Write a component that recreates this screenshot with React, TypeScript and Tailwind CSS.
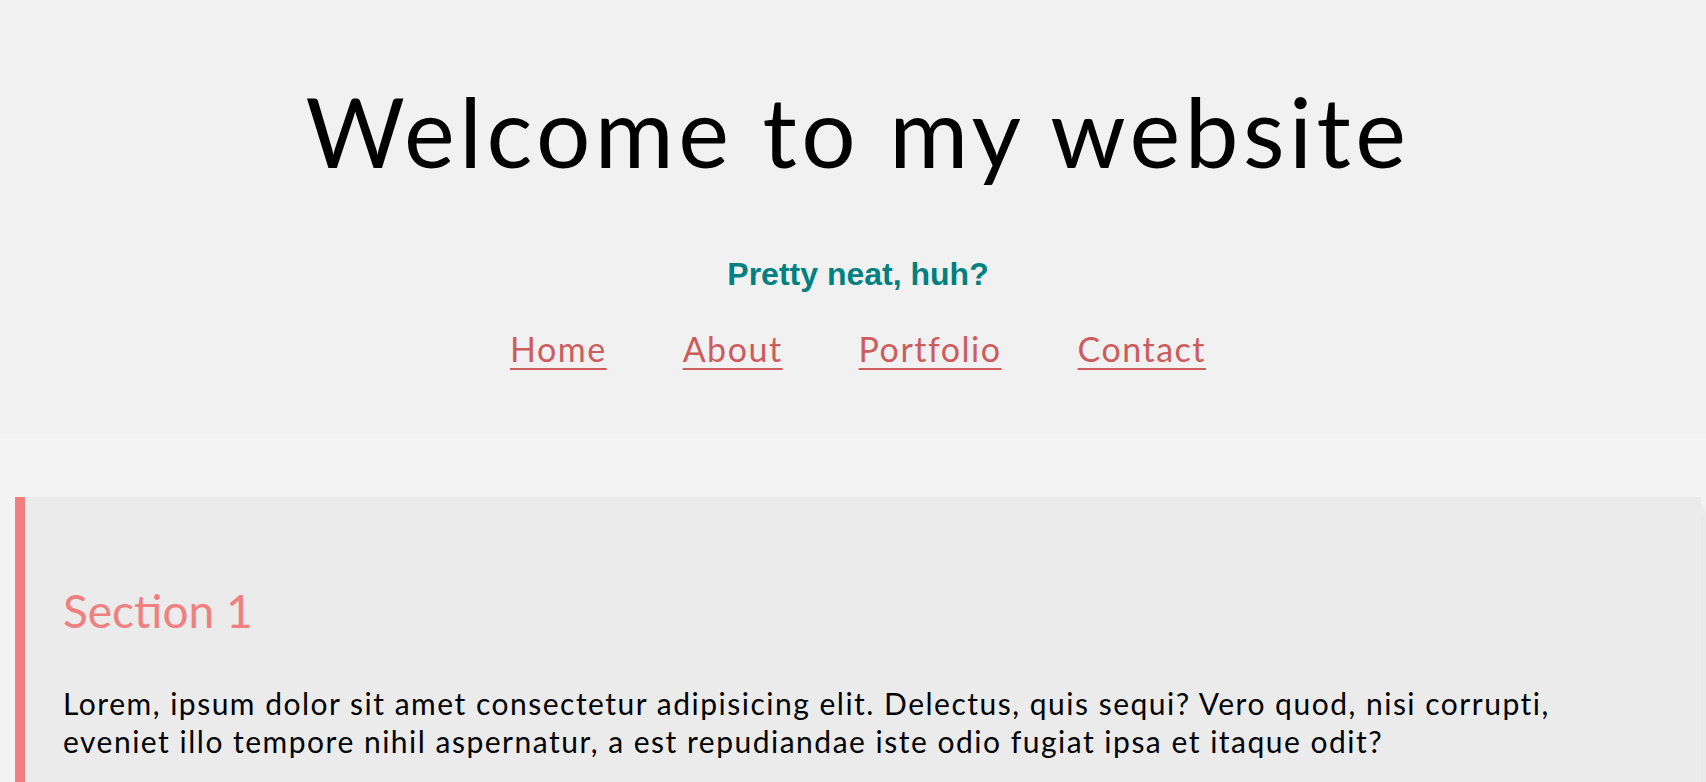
import React from "react";

export default function App() {
  return (
    <div className="min-h-screen w-full overflow-hidden bg-[#f3f3f3] font-['Lato',sans-serif] text-black">
      <header className="flex h-[433px] flex-col items-center bg-[#f1f1f1] pl-[10px]">
        <h1 className="mt-[76px] text-[96px] font-normal leading-[110px] tracking-[4.5px]">
          Welcome to my website
        </h1>
        <p className="mt-[68px] font-['Liberation_Sans',Arial,sans-serif] text-[32px] font-bold leading-[40px] text-[#008080]">
          Pretty neat, huh?
        </p>
        <nav className="mt-[35px] flex gap-[76px] text-[34px] leading-[40px] tracking-[1.5px]">
          {["Home", "About", "Portfolio", "Contact"].map((l) => (
            <a
              key={l}
              href="#"
              className="text-[#cd5c5c] underline decoration-[#cd5c5c] decoration-2 underline-offset-[6px]"
            >
              {l}
            </a>
          ))}
        </nav>
      </header>
      <main className="pt-[64px]">
        <section className="ml-[15px] mr-[5px] border-l-[10px] border-[#f08080] bg-[#ebebeb] pb-10 pl-[38px] pr-[38px] pt-[86px] shadow-[6px_12px_8px_rgba(0,0,0,0.05)]">
          <h2 className="text-[46px] font-normal leading-[56px] text-[#f08080]">
            Section 1
          </h2>
          <p className="mt-[45px] whitespace-nowrap text-[30px] leading-[38px] tracking-[1.5px]">
            Lorem, ipsum dolor sit amet consectetur adipisicing elit. Delectus, quis sequi? Vero quod, nisi corrupti,
            <br />
            eveniet illo tempore nihil aspernatur, a est repudiandae iste odio fugiat ipsa et itaque odit?
          </p>
        </section>
      </main>
    </div>
  );
}
